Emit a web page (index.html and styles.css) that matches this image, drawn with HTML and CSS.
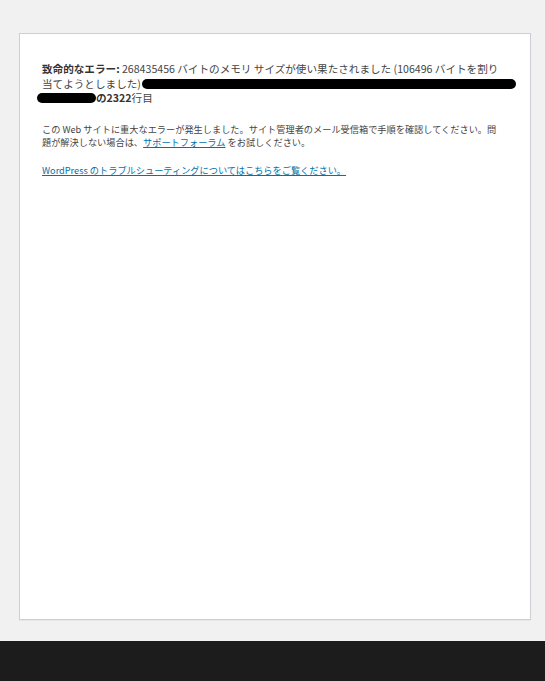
FILE: index.html
```html
<!DOCTYPE html>
<html lang="ja">
<head>
<meta charset="utf-8">
<title>WordPress › エラー</title>
<link rel="stylesheet" href="styles.css">
</head>
<body>
<div class="page">
  <div class="card">
    <p class="msg msg-error"><strong>致命的なエラー:</strong> 268435456 バイトのメモリ サイズが使い果たされました (106496 バイトを割り当てようとしました)<span class="redact redact-long"></span><span class="redact redact-short"></span><strong>の2322</strong>行目</p>
    <p class="msg msg-info">この Web サイトに重大なエラーが発生しました。サイト管理者のメール受信箱で手順を確認してください。問題が解決しない場合は、<a href="#">サポートフォーラム</a> をお試しください。</p>
    <p class="msg msg-link"><a href="#">WordPress のトラブルシューティングについてはこちらをご覧ください。</a></p>
  </div>
</div>
<div class="taskbar"></div>
</body>
</html>
```
FILE: styles.css
```css
html, body {
  margin: 0;
  padding: 0;
}
body {
  background: #f1f1f1;
  width: 545px;
  height: 681px;
  overflow: hidden;
  font-family: "Noto Sans CJK JP", "Noto Sans", sans-serif;
  color: #444;
}
.page {
  padding: 33px 14px 0 19px;
  height: 608px;
}
.card {
  background: #fff;
  border: 1px solid #ccd0d4;
  box-shadow: 0 1px 1px rgba(0, 0, 0, 0.04);
  padding: 0 26px 0 22px;
  box-sizing: border-box;
  height: 587px;
  overflow: hidden;
}
.msg {
  margin: 0;
}
.msg-error {
  margin-top: 28px;
  font-size: 10.6px;
  line-height: 14.5px;
}
.msg-info {
  margin-top: 17px;
  font-size: 9.2px;
  line-height: 13.5px;
}
.msg-link {
  margin-top: 14px;
  font-size: 9.2px;
  line-height: 13.5px;
}
strong {
  font-weight: 700;
  color: #333;
}
a {
  color: #0073aa;
  text-decoration: underline;
}
.redact {
  display: inline-block;
  height: 10px;
  background: #000;
  border-radius: 5px;
  vertical-align: -1px;
}
.redact-long {
  width: 374px;
  margin-left: 1px;
  margin-right: -40px;
}
.redact-short {
  width: 59px;
  margin-left: -5px;
}
.taskbar {
  height: 40px;
  background: #1c1c1c;
}
```
